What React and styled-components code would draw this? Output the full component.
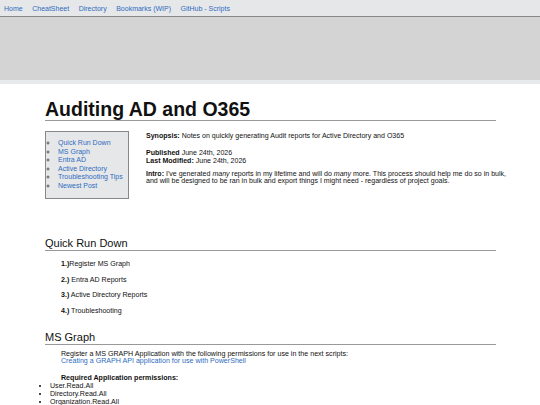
import React from 'react';
import styled, { createGlobalStyle } from 'styled-components';

const GlobalStyle = createGlobalStyle`
  html, body {
    margin: 0;
    padding: 0;
    background: #ffffff;
    font-family: "Liberation Sans", Arial, sans-serif;
    color: #111;
  }
`;

const Nav = styled.nav`
  display: flex;
  align-items: center;
  height: 16px;
  padding: 0 0 0 4px;
  gap: 9.5px;
  background: #e6e7e9;
  border-bottom: 1px solid #888;
`;

const NavLink = styled.a`
  font-size: 7px;
  color: #2f6cc0;
  text-decoration: none;
`;

const Banner = styled.div`
  height: 63px;
  background: #d4d4d4;
  border-bottom: 4px solid #e8e9eb;
`;

const Main = styled.main`
  padding: 14px 44px 0 45px;
`;

const Title = styled.h1`
  margin: 0;
  font-size: 19.5px;
  line-height: 22px;
  font-weight: bold;
  border-bottom: 1px solid #999;
`;

const Header = styled.div`
  display: flex;
  align-items: flex-start;
  gap: 17px;
  margin-top: 10px;
`;

const Toc = styled.ul`
  flex: none;
  margin: 0;
  width: 84px;
  height: 68px;
  box-sizing: border-box;
  padding: 7px 0 0 12px;
  background: #e6e7e9;
  border: 1px solid #888;
  list-style: circle;
  font-size: 7px;
  line-height: 8.6px;
  color: #555;
  white-space: nowrap;
`;

const TocLink = styled.a`
  color: #2f6cc0;
  text-decoration: none;
`;

const Intro = styled.div`
  flex: 1;
  font-size: 7.05px;
  line-height: 7.3px;
  padding-top: 1px;
  white-space: nowrap;
`;

const Para = styled.p`
  margin: 0 0 ${p => p.gap || 7}px;
`;

const Section = styled.section`
  margin-top: ${p => p.top}px;
`;

const Heading = styled.h2`
  margin: 0;
  font-size: 11px;
  line-height: 13px;
  font-weight: normal;
  border-bottom: 1px solid #999;
`;

const Steps = styled.div`
  display: flex;
  flex-direction: column;
  gap: 8px;
  padding: 10px 0 0 16px;
  font-size: 7.1px;
  line-height: 7.5px;
`;

const Body = styled.div`
  padding: 6px 0 0 16px;
  font-size: 7.1px;
  line-height: 7.3px;
`;

const Link = styled.a`
  color: #2f6cc0;
  text-decoration: none;
`;

const Perms = styled.ul`
  margin: 0;
  padding-left: 5px;
  list-style: disc;
  font-size: 7.1px;
  line-height: 8px;
`;

const tocItems = [
  'Quick Run Down',
  'MS Graph',
  'Entra AD',
  'Active Directory',
  'Troubleshooting Tips',
  'Newest Post',
];

export default function App() {
  return (
    <>
      <GlobalStyle />
      <Nav>
        {['Home', 'CheatSheet', 'Directory', 'Bookmarks (WIP)', 'GitHub - Scripts'].map(l => (
          <NavLink key={l} href="#">{l}</NavLink>
        ))}
      </Nav>
      <Banner />
      <Main>
        <Title>Auditing AD and O365</Title>
        <Header>
          <Toc>
            {tocItems.map(t => (
              <li key={t}><TocLink href="#">{t}</TocLink></li>
            ))}
          </Toc>
          <Intro>
            <Para gap={10}><b>Synopsis:</b> Notes on quickly generating Audit reports for Active Directory and O365</Para>
            <Para gap={6}>
              <b>Published</b> June 24th, 2026<br />
              <b>Last Modified:</b> June 24th, 2026
            </Para>
            <Para>
              <b>Intro:</b> I've generated <i>many</i> reports in my lifetime and will do <i>many</i> more. This process should help me do so in bulk,<br />
              and will be designed to be ran in bulk and export things I might need - regardless of project goals.
            </Para>
          </Intro>
        </Header>
        <Section top={38}>
          <Heading>Quick Run Down</Heading>
          <Steps>
            <div><b>1.)</b>Register MS Graph</div>
            <div><b>2.)</b> Entra AD Reports</div>
            <div><b>3.)</b> Active Directory Reports</div>
            <div><b>4.)</b> Troubleshooting</div>
          </Steps>
        </Section>
        <Section top={16}>
          <Heading>MS Graph</Heading>
          <Body>
            <Para gap={9}>
              Register a MS GRAPH Application with the following permissions for use in the next scripts:<br />
              <Link href="#">Creating a GRAPH API application for use with PowerShell</Link>
            </Para>
            <b>Required Application permissions:</b>
          </Body>
          <Perms>
            <li>User.Read.All</li>
            <li>Directory.Read.All</li>
            <li>Organization.Read.All</li>
          </Perms>
        </Section>
      </Main>
    </>
  );
}
